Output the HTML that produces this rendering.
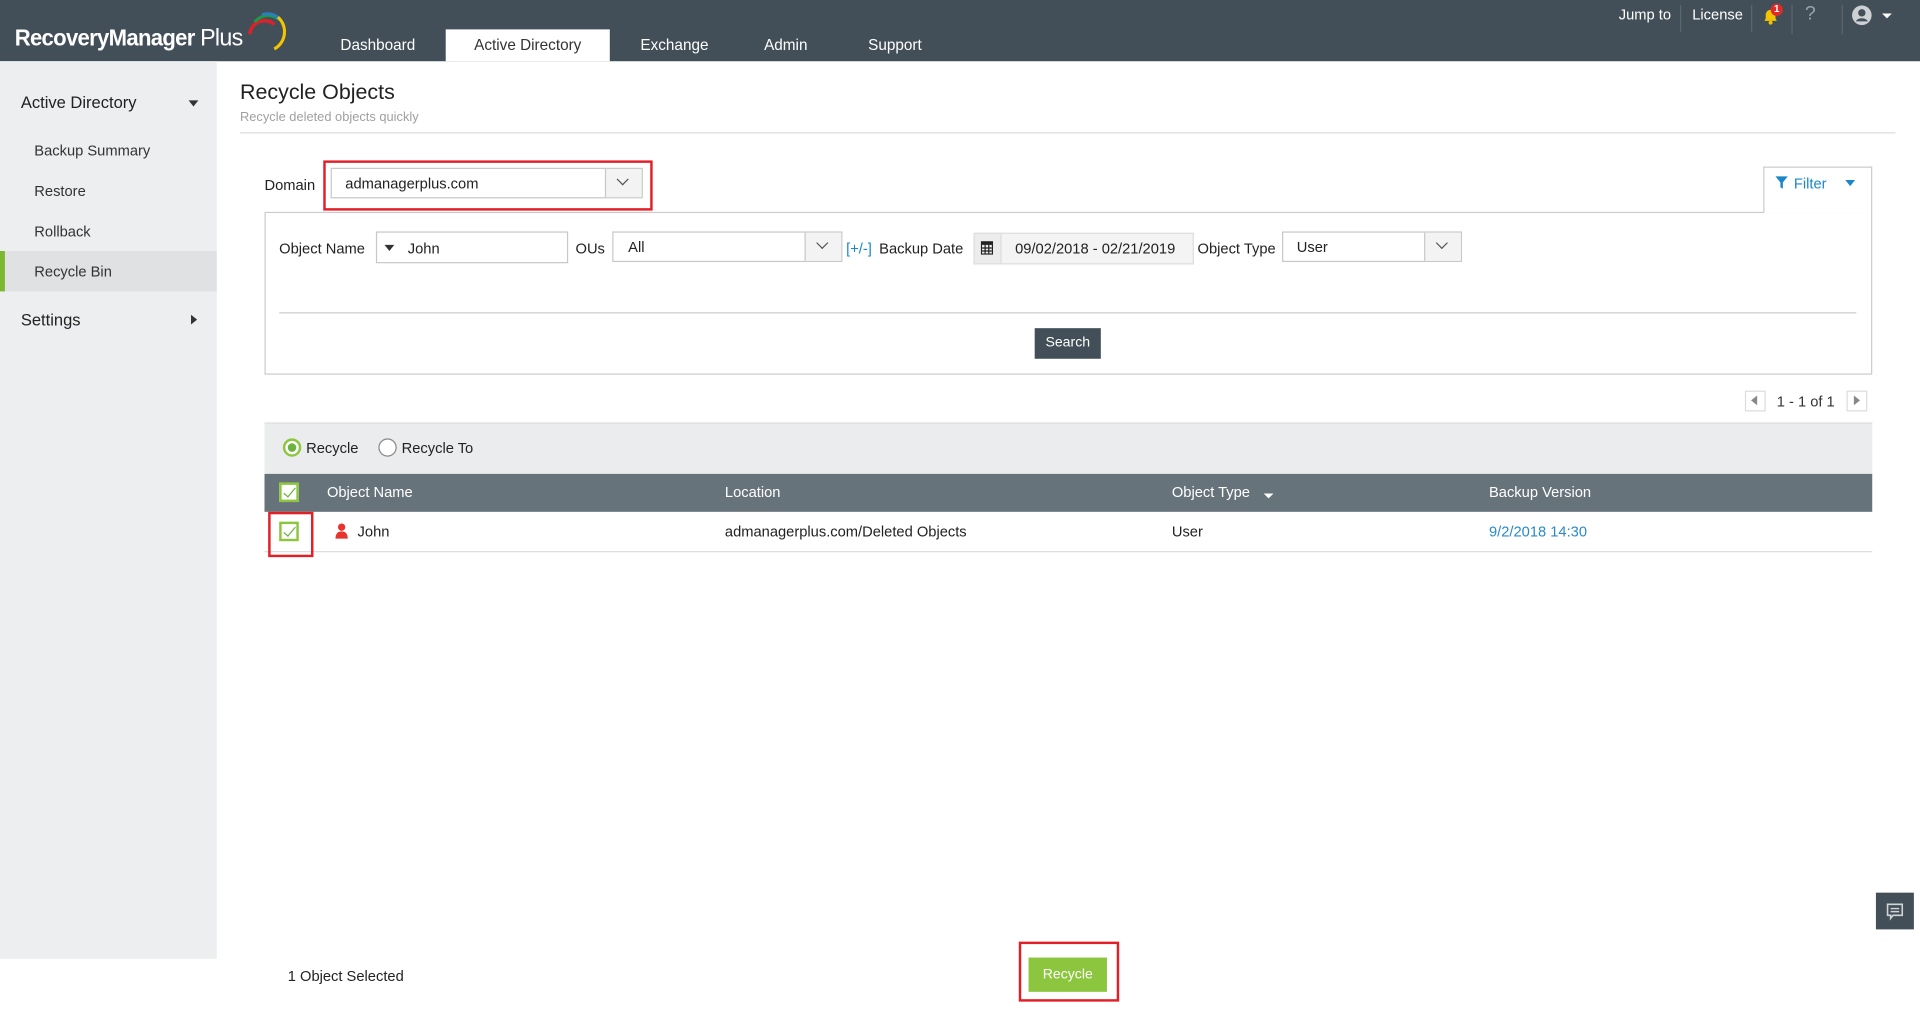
<!DOCTYPE html>
<html><head><meta charset="utf-8">
<style>
*{box-sizing:border-box;margin:0;padding:0}
html,body{width:1920px;height:1020px;overflow:hidden;background:#fff}
#w{position:absolute;left:0;top:0;width:1568px;height:833px;transform:scale(1.22449);transform-origin:0 0;font-family:"Liberation Sans",sans-serif;font-size:12px;color:#222}
.a{position:absolute}
.hdr{left:0;top:0;width:1568px;height:50px;background:#434f58}
.tab{top:24px;height:26px;line-height:27px;color:#fff;font-size:12.5px}
.sb{left:0;top:50px;width:177px;height:733px;background:#eceeef}
.si{left:28px;font-size:12px;color:#333}
.box{border:1px solid #c8c8c8;background:#fff}
.dd{border-left:1px solid #c8c8c8;background:#f3f3f3}
.chev{width:7px;height:7px;border-right:1.6px solid #555;border-bottom:1.6px solid #555;transform:rotate(45deg)}
.cb{width:16px;height:16px;border:2px solid #8cc63f;background:#fff}
.cb:after{content:"";position:absolute;left:4px;top:0px;width:4px;height:9px;border-right:1.5px solid #6cb33f;border-bottom:1.5px solid #6cb33f;transform:rotate(40deg)}
.th{top:387px;height:31px;line-height:31px;color:#fff;font-size:12px}
</style></head><body><div id="w">
<div class="a hdr"></div>
<div class="a" style="left:12px;top:20px;color:#fff;font-size:19px;font-weight:bold;letter-spacing:-0.6px;transform:scaleX(0.95);transform-origin:0 0">RecoveryManager <span style="font-weight:normal;font-size:20px">Plus</span></div>
<svg class="a" style="left:196px;top:8px" width="40" height="36" viewBox="0 0 40 36" fill="none"><path d="M8 20 A12 12 0 0 1 28 12" stroke="#d8232a" stroke-width="3"/><path d="M12 10 A14 14 0 0 1 32 8" stroke="#1a9a48" stroke-width="2.5"/><path d="M18 4 A14 14 0 0 1 36 14" stroke="#2a7fc1" stroke-width="2.5"/><path d="M31 6 A16 16 0 0 1 28 32" stroke="#f5c400" stroke-width="2.5"/></svg>
<div class="a tab" style="left:278px">Dashboard</div>
<div class="a tab" style="left:364px;width:134px;background:#fff;color:#333;text-align:center">Active Directory</div>
<div class="a tab" style="left:523px">Exchange</div>
<div class="a tab" style="left:624px">Admin</div>
<div class="a tab" style="left:709px">Support</div>
<div class="a" style="left:1322px;top:5px;color:#fff;font-size:12px">Jump to</div>
<div class="a" style="left:1372px;top:4px;width:1px;height:22px;background:#5b666e"></div>
<div class="a" style="left:1382px;top:5px;color:#fff;font-size:12px">License</div>
<div class="a" style="left:1430px;top:4px;width:1px;height:22px;background:#5b666e"></div>
<svg class="a" style="left:1438px;top:5px" width="16" height="16" viewBox="0 0 16 16"><path d="M3 12 L4 10 V7 A4 4 0 0 1 12 7 V10 L13 12 Z" fill="#f2c500"/><circle cx="8" cy="13.5" r="1.6" fill="#f2c500"/></svg>
<div class="a" style="left:1446px;top:3px;width:10px;height:10px;border-radius:5px;background:#e02a2a;color:#fff;font-size:8px;line-height:10px;text-align:center;font-weight:bold">1</div>
<div class="a" style="left:1463px;top:4px;width:1px;height:24px;background:#5b666e"></div>
<div class="a" style="left:1474px;top:3px;color:#9aa3a9;font-size:16px">?</div>
<div class="a" style="left:1504px;top:4px;width:1px;height:24px;background:#5b666e"></div>
<svg class="a" style="left:1512px;top:4px" width="17" height="17" viewBox="0 0 17 17"><circle cx="8.5" cy="8.5" r="8" fill="#cdd1d4"/><circle cx="8.5" cy="6.5" r="3" fill="#434f58"/><path d="M3.5 13.5 A5.5 4.5 0 0 1 13.5 13.5" fill="#434f58"/></svg>
<div class="a" style="left:1537px;top:11px;border-left:4px solid transparent;border-right:4px solid transparent;border-top:4px solid #fff"></div>

<div class="a sb"></div>
<div class="a" style="left:17px;top:76px;font-size:13.5px;color:#222">Active Directory</div>
<div class="a" style="left:154px;top:82px;border-left:4px solid transparent;border-right:4px solid transparent;border-top:5px solid #333"></div>
<div class="a si" style="top:116px">Backup Summary</div>
<div class="a si" style="top:149px">Restore</div>
<div class="a si" style="top:182px">Rollback</div>
<div class="a" style="left:0;top:205px;width:177px;height:33px;background:#dfe1e3"></div>
<div class="a" style="left:0;top:205px;width:4px;height:33px;background:#7cb82f"></div>
<div class="a si" style="top:215px">Recycle Bin</div>
<div class="a" style="left:17px;top:254px;font-size:13.5px;color:#222">Settings</div>
<div class="a" style="left:156px;top:257px;border-top:4px solid transparent;border-bottom:4px solid transparent;border-left:5px solid #333"></div>

<div class="a" style="left:196px;top:65px;font-size:17.5px;color:#222">Recycle Objects</div>
<div class="a" style="left:196px;top:90px;font-size:10.5px;color:#a0a0a0">Recycle deleted objects quickly</div>
<div class="a" style="left:196px;top:108px;width:1352px;height:1px;background:#ddd"></div>

<div class="a" style="left:216px;top:144px">Domain</div>
<div class="a" style="left:264px;top:131px;width:269px;height:41px;border:2px solid #e21e26"></div>
<div class="a box" style="left:270px;top:137px;width:255px;height:25px"></div>
<div class="a" style="left:282px;top:143px">admanagerplus.com</div>
<div class="a dd" style="left:494px;top:138px;width:30px;height:23px"></div>
<div class="a chev" style="left:505px;top:143px"></div>

<div class="a" style="left:1440px;top:136px;width:89px;height:38px;border:1px solid #ccc;border-bottom:none;background:#fff;z-index:2"></div>
<svg class="a" style="left:1449px;top:143px;z-index:3" width="12" height="12" viewBox="0 0 12 12"><path d="M1 1 H11 L7 6 V11 L5 10 V6 Z" fill="#1b87c9"/></svg>
<div class="a" style="left:1465px;top:143px;color:#1b87c9;z-index:3">Filter</div>
<div class="a" style="left:1507px;top:147px;border-left:4px solid transparent;border-right:4px solid transparent;border-top:5px solid #1b87c9;z-index:3"></div>
<div class="a" style="left:216px;top:173px;width:1313px;height:133px;border:1px solid #ccc"></div>

<div class="a" style="left:228px;top:196px">Object Name</div>
<div class="a box" style="left:307px;top:189px;width:157px;height:26px"></div>
<div class="a" style="left:314px;top:200px;border-left:4px solid transparent;border-right:4px solid transparent;border-top:5px solid #333"></div>
<div class="a" style="left:333px;top:196px">John</div>
<div class="a" style="left:470px;top:196px">OUs</div>
<div class="a box" style="left:500px;top:189px;width:188px;height:25px"></div>
<div class="a" style="left:513px;top:195px">All</div>
<div class="a dd" style="left:657px;top:190px;width:30px;height:23px"></div>
<div class="a chev" style="left:668px;top:195px"></div>
<div class="a" style="left:691px;top:196px;color:#1b87c9">[+/-]</div>
<div class="a" style="left:718px;top:196px">Backup Date</div>
<div class="a" style="left:795px;top:190px;width:23px;height:26px;background:#ececec;border:1px solid #ddd"></div>
<svg class="a" style="left:801px;top:196px" width="10" height="12" viewBox="0 0 10 12"><rect x="0" y="1" width="10" height="11" fill="#222"/><rect x="1" y="4" width="8" height="7" fill="#ececec"/><path d="M1 6.5 H9 M1 9 H9 M3.5 4 V11 M6.5 4 V11" stroke="#222" stroke-width="1"/></svg>
<div class="a" style="left:817px;top:190px;width:158px;height:26px;background:#f4f4f4;border:1px solid #ddd"></div>
<div class="a" style="left:829px;top:196px">09/02/2018 - 02/21/2019</div>
<div class="a" style="left:978px;top:196px">Object Type</div>
<div class="a box" style="left:1047px;top:189px;width:147px;height:25px"></div>
<div class="a" style="left:1059px;top:195px">User</div>
<div class="a dd" style="left:1163px;top:190px;width:30px;height:23px"></div>
<div class="a chev" style="left:1174px;top:195px"></div>
<div class="a" style="left:228px;top:255px;width:1288px;height:1px;background:#ccc"></div>
<div class="a" style="left:845px;top:268px;width:54px;height:25px;background:#434f58;color:#fff;line-height:25px;text-align:center;font-size:11.5px">Search</div>

<div class="a" style="left:1425px;top:319px;width:17px;height:17px;border:1px solid #ddd"></div>
<div class="a" style="left:1430px;top:323px;border-top:4px solid transparent;border-bottom:4px solid transparent;border-right:5px solid #888"></div>
<div class="a" style="left:1451px;top:321px;color:#333">1 - 1 of 1</div>
<div class="a" style="left:1508px;top:319px;width:17px;height:17px;border:1px solid #ddd"></div>
<div class="a" style="left:1514px;top:323px;border-top:4px solid transparent;border-bottom:4px solid transparent;border-left:5px solid #888"></div>

<div class="a" style="left:216px;top:345px;width:1313px;height:42px;background:#ebeced;border-top:1px solid #ddd"></div>
<div class="a" style="left:231px;top:358px;width:15px;height:15px;border-radius:50%;border:2px solid #8cc63f;background:#fff"></div>
<div class="a" style="left:235px;top:362px;width:7px;height:7px;border-radius:50%;background:#6cb33f"></div>
<div class="a" style="left:250px;top:359px">Recycle</div>
<div class="a" style="left:309px;top:358px;width:15px;height:15px;border-radius:50%;border:1.5px solid #888;background:#fff"></div>
<div class="a" style="left:328px;top:359px">Recycle To</div>

<div class="a" style="left:216px;top:387px;width:1313px;height:31px;background:#67737b"></div>
<div class="a cb" style="left:228px;top:394px"></div>
<div class="a th" style="left:267px">Object Name</div>
<div class="a th" style="left:592px">Location</div>
<div class="a th" style="left:957px">Object Type</div>
<div class="a" style="left:1032px;top:403px;border-left:4px solid transparent;border-right:4px solid transparent;border-top:4px solid #fff"></div>
<div class="a th" style="left:1216px">Backup Version</div>
<div class="a" style="left:216px;top:450px;width:1313px;height:1px;background:#ddd"></div>
<div class="a" style="left:219px;top:418px;width:37px;height:37px;border:2px solid #e21e26"></div>
<div class="a cb" style="left:228px;top:426px"></div>
<svg class="a" style="left:273px;top:427px" width="12" height="13" viewBox="0 0 12 13"><circle cx="6" cy="3.5" r="3" fill="#e5352e"/><path d="M1 13 Q1 7 6 7 Q11 7 11 13 Z" fill="#e5352e"/></svg>
<div class="a" style="left:292px;top:427px">John</div>
<div class="a" style="left:592px;top:427px">admanagerplus.com/Deleted Objects</div>
<div class="a" style="left:957px;top:427px">User</div>
<div class="a" style="left:1216px;top:427px;color:#2a8ac6">9/2/2018 14:30</div>

<div class="a" style="left:1532px;top:729px;width:31px;height:30px;background:#434f58"></div>
<svg class="a" style="left:1540px;top:737px" width="15" height="15" viewBox="0 0 15 15" fill="none"><path d="M1.5 1.5 H13.5 V10.5 H6 L4 13 V10.5 H1.5 Z" stroke="#cfd4d7" stroke-width="1.3"/><path d="M4 5 H11 M4 7.5 H11" stroke="#cfd4d7" stroke-width="1.2"/></svg>
<div class="a" style="left:235px;top:790px">1 Object Selected</div>
<div class="a" style="left:832px;top:769px;width:82px;height:49px;border:2px solid #e21e26"></div>
<div class="a" style="left:840px;top:782px;width:64px;height:28px;background:#8cc63f;color:#fff;line-height:28px;text-align:center;font-size:11.5px">Recycle</div>
</div></body></html>
